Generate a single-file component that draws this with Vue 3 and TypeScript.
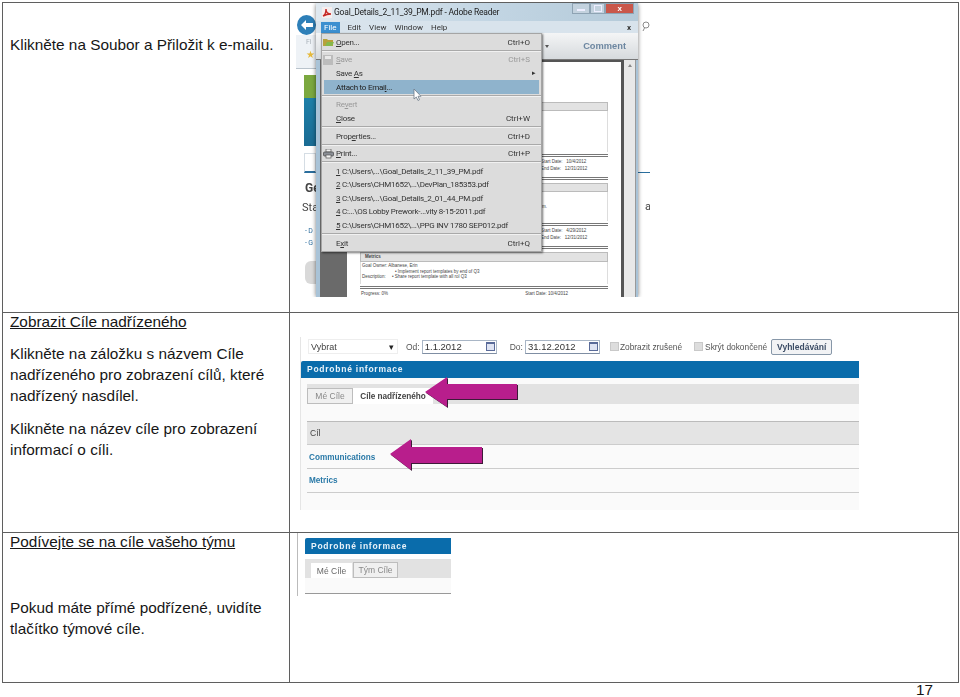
<script setup lang="ts">
interface MenuRow {
  label: string
  key?: string
  height: number
  // index of the underlined access key in the label
  ul?: number
  icon?: 'open' | 'save' | 'print'
  muted?: boolean
  hover?: boolean
  more?: boolean
  sep?: boolean
}

const menuRows: MenuRow[] = [
  { label: 'Open...', key: 'Ctrl+O', height: 14, ul: 0, icon: 'open' },
  { label: '', height: 4, sep: true },
  { label: 'Save', key: 'Ctrl+S', height: 13, ul: 0, icon: 'save', muted: true },
  { label: 'Save As', height: 14, ul: 5, more: true },
  { label: 'Attach to Email...', height: 14, ul: 14, hover: true },
  { label: '', height: 4, sep: true },
  { label: 'Revert', height: 13, ul: 2, muted: true },
  { label: 'Close', key: 'Ctrl+W', height: 14, ul: 0 },
  { label: '', height: 4, sep: true },
  { label: 'Properties...', key: 'Ctrl+D', height: 14, ul: 4 },
  { label: '', height: 4, sep: true },
  { label: 'Print...', key: 'Ctrl+P', height: 13, ul: 0, icon: 'print' },
  { label: '', height: 4, sep: true },
  { label: '1 C:\\Users\\...\\Goal_Details_2_11_39_PM.pdf', height: 14, ul: 0 },
  { label: '2 C:\\Users\\CHM1652\\...\\DevPlan_185353.pdf', height: 13, ul: 0 },
  { label: '3 C:\\Users\\...\\Goal_Details_2_01_44_PM.pdf', height: 14, ul: 0 },
  { label: '4 C:...\\OS Lobby Prework-...vity 8-15-2011.pdf', height: 13, ul: 0 },
  { label: '5 C:\\Users\\CHM1652\\...\\PPG INV 1780 SEP012.pdf', height: 14, ul: 0 },
  { label: '', height: 4, sep: true },
  { label: 'Exit', key: 'Ctrl+Q', height: 14, ul: 1 }
]

const menuBar = ['Edit', 'View', 'Window', 'Help']
</script>

<template>
  <div class="sheet">
    <section class="row row-one">
      <div class="copy">
        <p class="first">Klikněte na Soubor a Přiložit k e-mailu.</p>
      </div>
      <div class="pic">
        <div class="shot reader">
          <div class="strip strip-left">
            <div class="back">
              <svg width="12" height="10" viewBox="0 0 12 10"><path d="M5 0 0 5l5 5V7h7V3H5z" fill="#fff" /></svg>
            </div>
            <div class="bg-tools"><span class="fi">Fi</span><span class="star">★</span></div>
            <div class="bg-green"></div>
            <div class="bg-blue"></div>
            <div class="bg-white"></div>
            <b class="bg-head">Ge</b>
            <span class="bg-text">Sta</span>
            <span class="bg-link">- D</span>
            <span class="bg-link">- G</span>
            <div class="bg-round"></div>
          </div>

          <div class="window">
            <div class="titlebar">
              <svg width="10" height="11" viewBox="0 0 10 11">
                <rect width="10" height="11" fill="#f6eeee" />
                <path d="M1 9c2-1 3-4 3-7 0 3 2 5 5 5-3 0-6 1-8 2z" fill="none" stroke="#c62a26" stroke-width="1.4" />
              </svg>
              <span class="title">Goal_Details_2_11_39_PM.pdf - Adobe Reader</span>
              <div class="controls">
                <i class="ctl"><em class="min"></em></i>
                <i class="ctl mid-ctl"><em class="max"></em></i>
                <i class="ctl close">x</i>
              </div>
            </div>
            <div class="menubar">
              <span class="file">File</span>
              <span v-for="m in menuBar" :key="m">{{ m }}</span>
              <b class="menubar-x">x</b>
            </div>
            <div class="toolbar"><i class="drop"></i><span class="comment">Comment</span></div>
            <div class="docarea">
              <div class="doc-side"></div>
              <div class="doc-page">
                <div class="doc-section">
                  <div class="doc-head"></div>
                  <div class="doc-body tall"></div>
                  <div class="doc-double"></div>
                  <div class="doc-dates"><span>Start Date:&nbsp;&nbsp; 10/4/2012</span><span>End Date:&nbsp;&nbsp; 12/31/2012</span></div>
                  <div class="doc-double"></div>
                </div>
                <div class="doc-section">
                  <div class="doc-head"></div>
                  <div class="doc-body mid"><span>them.</span></div>
                  <div class="doc-double"></div>
                  <div class="doc-dates"><span>Start Date:&nbsp;&nbsp; 4/29/2012</span><span>End Date:&nbsp;&nbsp; 12/31/2012</span></div>
                  <div class="doc-double"></div>
                </div>
                <div class="doc-section">
                  <div class="doc-head labelled">Metrics</div>
                  <div class="doc-body metrics">
                    <span>Goal Owner: Albanese, Erin</span>
                    <span class="bullet">• Implement report templates by end of Q3</span>
                    <span>Description: &nbsp;&nbsp;&nbsp;&nbsp;• Share report template with all rol Q3</span>
                  </div>
                  <div class="doc-double"></div>
                  <div class="doc-progress"><span>Progress: 0%</span><span>Start Date: 10/4/2012</span></div>
                </div>
              </div>
              <div class="doc-scroll"><i></i></div>
            </div>

            <div class="menu">
              <template v-for="(item, i) in menuRows" :key="i">
                <div v-if="item.sep" class="menu-sep"></div>
                <div
                  v-else
                  class="menu-row"
                  :class="{ muted: item.muted, hover: item.hover }"
                  :style="{ height: item.height + 'px' }"
                >
                  <span class="menu-icon">
                    <svg v-if="item.icon === 'open'" width="11" height="10" viewBox="0 0 11 10">
                      <path d="M0 2h4l1 1h5v6H0z" fill="#b7a13a" /><path d="M2 9l2-4h7l-2 4z" fill="#86b84a" />
                    </svg>
                    <svg v-if="item.icon === 'save'" width="10" height="10" viewBox="0 0 10 10">
                      <rect width="10" height="10" fill="#bcbcbc" /><rect x="2" y="1" width="6" height="3" fill="#e9e9e9" />
                    </svg>
                    <svg v-if="item.icon === 'print'" width="11" height="10" viewBox="0 0 11 10">
                      <rect x="3" y="0" width="5" height="3" fill="#f2f2f2" stroke="#555" stroke-width=".7" />
                      <rect x=".5" y="3" width="10" height="4" rx="1" fill="#8b8f96" stroke="#444" stroke-width=".7" />
                      <rect x="3" y="6" width="5" height="3" fill="#f2f2f2" stroke="#555" stroke-width=".7" />
                    </svg>
                  </span>
                  <span class="menu-label">{{ item.label.slice(0, item.ul) }}<u>{{ item.label.charAt(item.ul ?? 0) }}</u>{{ item.label.slice((item.ul ?? 0) + 1) }}</span>
                  <span v-if="item.key" class="menu-key">{{ item.key }}</span>
                  <span v-if="item.more" class="menu-more">▸</span>
                </div>
              </template>
            </div>
            <svg class="cursor" width="9" height="13" viewBox="0 0 9 13">
              <path d="M1 1v10l2.300-2 1.700 3.500 1.500-.8L5 8.300h3z" fill="#fff" stroke="#6c7a88" stroke-width=".8" />
            </svg>
          </div>

          <div class="strip strip-right">
            <svg class="lens" width="8" height="11" viewBox="0 0 8 11">
              <circle cx="4" cy="4" r="3" fill="none" stroke="#8a8a8a" />
              <path d="M2.500 7 1 10" stroke="#8a8a8a" />
            </svg>
            <div class="right-line"></div>
            <span class="bg-text a">a</span>
          </div>
        </div>
      </div>
    </section>

    <section class="row row-two">
      <div class="copy">
        <p class="heading">Zobrazit Cíle nadřízeného</p>
        <p class="para">Klikněte na záložku s názvem Cíle nadřízeného pro zobrazení cílů, které nadřízený nasdílel.</p>
        <p class="para second">Klikněte na název cíle pro zobrazení informací o cíli.</p>
      </div>
      <div class="pic">
        <div class="shot goals">
          <div class="filters">
            <div class="select"><span>Vybrat</span><i>▾</i></div>
            <label class="lbl from">Od:</label>
            <div class="date"><span>1.1.2012</span><i class="cal"></i></div>
            <label class="lbl to">Do:</label>
            <div class="date wide"><span>31.12.2012</span><i class="cal"></i></div>
            <i class="check first-check"></i><span class="check-label">Zobrazit zrušené</span>
            <i class="check second-check"></i><span class="check-label">Skrýt dokončené</span>
            <button class="search">Vyhledávání</button>
          </div>
          <div class="bluebar">Podrobné informace</div>
          <div class="panel">
            <div class="band">
              <span class="tab off">Mé Cíle</span>
              <span class="tab on">Cíle nadřízeného</span>
            </div>
            <div class="grid-head">Cíl</div>
            <div class="grid-row"><a>Communications</a></div>
            <div class="grid-row"><a>Metrics</a></div>
          </div>
          <svg class="arrows" width="559" height="173" viewBox="0 0 559 173">
            <g>
              <path d="M126 56 148 41v7h70v15h-70v8z" fill="#3d1a38" />
              <path d="M125 55 147 40v7h70v15h-70v8z" fill="#b81e8c" />
              <path d="M91 118 112 103v8h71v16h-71v7z" fill="#3d1a38" />
              <path d="M90 117 111 102v8h71v16h-71v7z" fill="#b81e8c" />
            </g>
          </svg>
        </div>
      </div>
    </section>

    <section class="row row-three">
      <div class="copy">
        <p class="heading">Podívejte se na cíle vašeho týmu</p>
        <p class="para gap">Pokud máte přímé podřízené, uvidíte tlačítko týmové cíle.</p>
      </div>
      <div class="pic">
        <div class="shot team">
          <div class="bluebar small">Podrobné informace</div>
          <div class="band small-band">
            <span class="tab on mine">Mé Cíle</span>
            <span class="tab off team-tab">Tým Cíle</span>
          </div>
          <div class="team-foot"></div>
        </div>
      </div>
    </section>

    <div class="pageno">17</div>
  </div>
</template>

<style>
html, body { background: #fff; }
</style>

<style scoped>
.sheet {
  width: 960px;
  height: 697px;
  padding: 2px 0 0 2px;
  box-sizing: border-box;
  font-family: "Liberation Sans", Arial, sans-serif;
  color: #161616;
  overflow: hidden;
}
.row {
  display: grid;
  grid-template-columns: 287px 1fr;
  width: 957px;
  box-sizing: border-box;
  border: 1px solid #5f5f5f;
  border-bottom: 0;
}
.row-one { height: 310px; }
.row-two { height: 220px; }
.row-three { height: 151px; border-bottom: 1px solid #5f5f5f; }
.copy {
  border-right: 1px solid #5f5f5f;
  padding-left: 7px;
  font-size: 15.35px;
  line-height: 21px;
}
.copy p { margin: 0; }
.first { padding-top: 31px; }
.heading { text-decoration: underline; }
.row-two .heading { margin-top: -2px; }
.row-two .para { margin-top: 11px; padding-right: 12px; }
.row-two .para.second { margin-top: 12px; }
.row-three .heading { margin-top: -2px; }
.row-three .para.gap { margin-top: 45px; padding-right: 12px; }

.shot { filter: blur(0.4px); overflow: hidden; position: relative; }

/* first picture */
.reader {
  display: flex;
  width: 354px;
  height: 294px;
  margin-left: 6px;
  font-family: Roboto, "Liberation Sans", sans-serif;
  font-size: 8px;
  letter-spacing: -.25px;
  color: #333;
}
.strip { width: 20px; flex: none; display: flex; flex-direction: column; background: #fff; }
.back {
  width: 19px;
  height: 20px;
  margin-top: 12px;
  margin-left: 1px;
  border-radius: 50%;
  background: #2d7fb8;
  display: flex;
  align-items: center;
  justify-content: center;
}
.bg-tools { height: 33px; background: #eef2f6; border-bottom: 1px solid #b9c3cc; font-size: 10px; color: #e6b93a; }
.fi { display: block; margin: 3px 0 0 10px; font-size: 7px; line-height: 8px; color: #aab2ba; }
.star { display: block; margin: 4px 0 0 10px; line-height: 10px; }
.bg-green { height: 23px; margin: 6px 0 0 8px; background: #7ba83f; }
.bg-blue { height: 48px; margin-left: 8px; background: linear-gradient(#1d7fa8, #1a6b93); }
.bg-white { height: 20px; margin: 7px 0 0 8px; border: 1px solid #d5dde4; border-bottom: 2px solid #2a6e9d; box-sizing: border-box; background: #fff; }
.bg-head { font-size: 12px; color: #444; margin: 9px 0 0 9px; line-height: 12px; letter-spacing: 0; white-space: nowrap; }
.bg-text { font-size: 11px; color: #444; margin: 8px 0 0 6px; line-height: 12px; letter-spacing: 0; }
.bg-link { font-size: 7px; color: #2f6f9f; line-height: 11px; margin: 1px 0 0 9px; }
.bg-head + .bg-text + .bg-link { margin-top: 12px; }
.bg-round { width: 11px; height: 23px; margin: 12px 0 0 9px; border-radius: 6px 0 0 6px; background: #d9d9d9; }
.window {
  width: 322px;
  flex: none;
  position: relative;
  display: flex;
  flex-direction: column;
  background: #a9c3d7;
  box-shadow: 0 0 4px rgba(0, 0, 0, .55);
  border-radius: 4px 4px 0 0;
}
.titlebar {
  height: 18px;
  display: flex;
  align-items: center;
  padding: 0 4px 0 6px;
  gap: 2px;
  background: linear-gradient(90deg, #dfe8ef, #c2d5e3 55%, #b4cad9);
  flex: none;
}
.title { font-size: 8.5px; letter-spacing: -.2px; color: #222; white-space: nowrap; }
.controls { display: flex; margin-left: auto; margin-top: -7px; }
.ctl {
  width: 18px;
  height: 11px;
  display: flex;
  align-items: center;
  justify-content: center;
  background: #c3d2de;
  border: 1px solid #8ea3b3;
  box-sizing: border-box;
  font-style: normal;
}
.ctl.mid-ctl { width: 15px; }
.ctl.close { width: 29px; background: #c9574a; color: #fff; font: bold 8px "Liberation Sans", sans-serif; }
.min { width: 8px; height: 2px; background: #eef; margin-top: 3px; }
.max { width: 6px; height: 5px; border: 1px solid #eef; }
.menubar {
  height: 12px;
  flex: none;
  display: flex;
  align-items: center;
  gap: 8px;
  padding-left: 5px;
  background: #d8e3ec;
  color: #333;
  letter-spacing: 0;
}
.file { background: #3c8fd0; color: #fff; padding: 1px 3px; }
.menubar-x { margin-left: auto; margin-right: 7px; font-size: 8px; }
.toolbar {
  height: 27px;
  flex: none;
  display: flex;
  align-items: center;
  background: linear-gradient(#f4f5f6, #d6dadd);
  border-bottom: 1px solid #777;
  box-sizing: border-box;
  padding: 0 12px 1px 229px;
}
.drop { width: 0; height: 0; border: 2px solid transparent; border-top: 3px solid #555; margin-top: 3px; }
.comment { margin-left: auto; font: bold 9.3px "Liberation Sans", sans-serif; letter-spacing: 0; color: #6d87a1; }
.docarea { flex: 1; min-height: 0; display: flex; padding: 0 2px 0 4px; background: #a9c3d7; overflow: hidden; }
.doc-side { width: 27px; flex: none; background: #6a6a6a; }
.doc-page {
  width: 277px;
  flex: none;
  background: #fff;
  padding: 40px 13px 0 13px;
  box-sizing: border-box;
  font-family: "Liberation Sans", sans-serif;
  font-size: 4.5px;
  letter-spacing: 0;
  color: #444;
  border-top: 2px solid #555;
  border-right: 3px solid #555;
}
.doc-section { margin-bottom: 3px; }
.doc-head { height: 9px; background: #e2e2e2; border: 1px solid #bbb; box-sizing: border-box; }
.doc-head.labelled { font-weight: bold; line-height: 8px; padding-left: 4px; height: 10px; }
.doc-body { border-left: 1px solid #ddd; border-right: 1px solid #ddd; box-sizing: border-box; }
.doc-body.tall { height: 41px; }
.doc-body.mid { height: 29px; display: flex; align-items: center; justify-content: flex-end; padding-right: 60px; }
.doc-body.metrics { height: 22px; display: flex; flex-direction: column; gap: .5px; padding: 1px; line-height: 5px; }
.bullet { padding-left: 33px; }
.doc-double { height: 3px; box-sizing: border-box; border-top: 1px solid #777; border-bottom: 1px solid #777; margin-top: 2px; }
.doc-dates { height: 18px; display: flex; flex-direction: column; gap: 2px; padding: 2px 0 0 181px; line-height: 5px; box-sizing: border-box; }
.doc-progress { display: flex; justify-content: space-between; padding: 2px 40px 0 1px; line-height: 5px; }
.doc-scroll { width: 12px; flex: none; background: #e8e8e8; border-right: 1px solid #999; box-sizing: border-box; }
.doc-scroll i { display: block; width: 0; height: 0; margin: 2px auto; border: 2px solid transparent; border-bottom: 3px solid #888; }

.menu {
  position: absolute;
  left: 5px;
  top: 30px;
  width: 221px;
  height: 219px;
  box-sizing: border-box;
  background: #dcdcdc;
  border: 1px solid #a5a5a5;
  box-shadow: 1px 1px 2px rgba(0, 0, 0, .55);
  padding-top: 1px;
  display: flex;
  flex-direction: column;
}
.menu-row {
  display: flex;
  align-items: center;
  flex: none;
  white-space: nowrap;
  color: #333;
  padding-right: 11px;
}
.menu-row.muted { color: #999; }
.menu-row.hover { background: #8fb3cc; margin: 0 2px; color: #222; }
.menu-row.hover .menu-icon { width: 12px; }
.menu-icon { width: 14px; flex: none; display: flex; justify-content: center; padding-right: 2px; box-sizing: border-box; }
.menu-key { margin-left: auto; letter-spacing: 0; }
.menu-more { margin-left: auto; font-size: 7px; margin-right: -6px; }
.menu-sep { height: 1px; flex: none; background: #a9a9a9; margin: 1px 0 2px; box-shadow: 0 1px 0 #f1f1f1; }
.cursor { position: absolute; left: 97px; top: 85px; }

.strip-right { width: 12px; }
.lens { margin: 18px 0 0 4px; flex: none; }
.right-line { height: 1px; margin-top: 140px; background: #2a6e9d; }
.a { margin: 28px 0 0 7px; }

/* second picture */
.goals {
  width: 559px;
  height: 173px;
  margin: 24px 0 0 10px;
  font-size: 9px;
  color: #555;
  border-left: 1px solid #e5e5e5;
  box-sizing: border-box;
}
.filters { height: 17px; display: flex; align-items: center; padding-left: 7px; margin-top: 1px; }
.select {
  width: 90px;
  height: 15px;
  display: flex;
  align-items: center;
  justify-content: space-between;
  box-sizing: border-box;
  padding: 0 3px 0 2px;
  border: 1px solid #eee;
  color: #444;
}
.select i { font-style: normal; color: #222; }
.lbl { margin-left: 8px; margin-right: 2px; font-size: 8.5px; }
.lbl.to { margin-left: 13px; }
.date {
  width: 75px;
  height: 14px;
  display: flex;
  align-items: center;
  justify-content: space-between;
  box-sizing: border-box;
  padding: 0 1px 0 2px;
  border: 1px solid #a9b6c6;
  border-bottom-color: #7f8ea3;
  color: #333;
  font-size: 9.5px;
}
.cal { width: 9px; height: 9px; box-sizing: border-box; border: 1px solid #5a6b99; border-top-width: 2px; background: #dfe4f3; }
.check { width: 9px; height: 9px; background: #ddd; border: 1px solid #c9c9c9; box-sizing: border-box; margin-right: 1px; }
.first-check { margin-left: 10px; }
.second-check { margin-left: 12px; margin-right: 2px; }
.check-label { font-size: 8.35px; white-space: nowrap; }
.search {
  margin-left: 4px;
  width: 61px;
  height: 16px;
  padding: 0;
  border: 1px solid #8797a8;
  border-radius: 2px;
  background: #f2f3f5;
  font: bold 8.5px "Liberation Sans", sans-serif;
  color: #3c4d66;
}
.bluebar {
  height: 17px;
  margin-top: 6px;
  background: #0a6cab;
  color: #e8f2f9;
  font: bold 8.5px/17px "Liberation Sans", sans-serif;
  letter-spacing: .75px;
  padding-left: 6px;
  border-radius: 2px 0 0 0;
}
.panel { height: 132px; background: #fafafa; padding: 6px 0 0 6px; }
.band { height: 20px; background: #e2e2e2; display: flex; align-items: flex-end; }
.tab {
  height: 16px;
  box-sizing: border-box;
  display: flex;
  align-items: center;
  justify-content: center;
  font-size: 8.5px;
}
.tab.off { width: 46px; border: 1px solid #bdbdbd; background: #f0f0f0; color: #888; }
.tab.on { width: 80px; background: #fff; color: #444; font-weight: bold; font-size: 8.2px; }
.grid-head {
  height: 24px;
  margin-top: 17px;
  background: #e4e4e4;
  border-top: 1px solid #bbb;
  border-bottom: 1px solid #ccc;
  box-sizing: border-box;
  padding-left: 3px;
  line-height: 23px;
  font-size: 8.5px;
  color: #444;
}
.grid-row {
  height: 23px;
  border-bottom: 1px solid #ccc;
  padding-left: 2px;
  line-height: 23px;
  font-size: 8.2px;
  font-weight: bold;
  color: #2b7aa8;
}
.grid-head + .grid-row { line-height: 25px; }
.arrows { position: absolute; left: -1px; top: 0; }

/* third picture */
.team {
  width: 154px;
  height: 63px;
  margin-left: 7px;
  border-left: 1px solid #bbb;
  box-sizing: border-box;
  padding: 5px 0 0 7px;
}
.bluebar.small { margin-top: 0; height: 16px; line-height: 16px; }
.small-band { margin-top: 5px; height: 19px; }
.tab.on.mine { width: 41px; margin-left: 6px; height: 15px; color: #666; font-weight: normal; font-size: 8.5px; }
.tab.off.team-tab { width: 45px; height: 16px; margin-left: 1px; }
.team-foot { height: 15px; background: #fafafa; border-bottom: 1px solid #999; }

.pageno { text-align: right; padding: 0 27px 0 0; font-size: 15.3px; line-height: 14px; width: 958px; box-sizing: border-box; }
</style>
